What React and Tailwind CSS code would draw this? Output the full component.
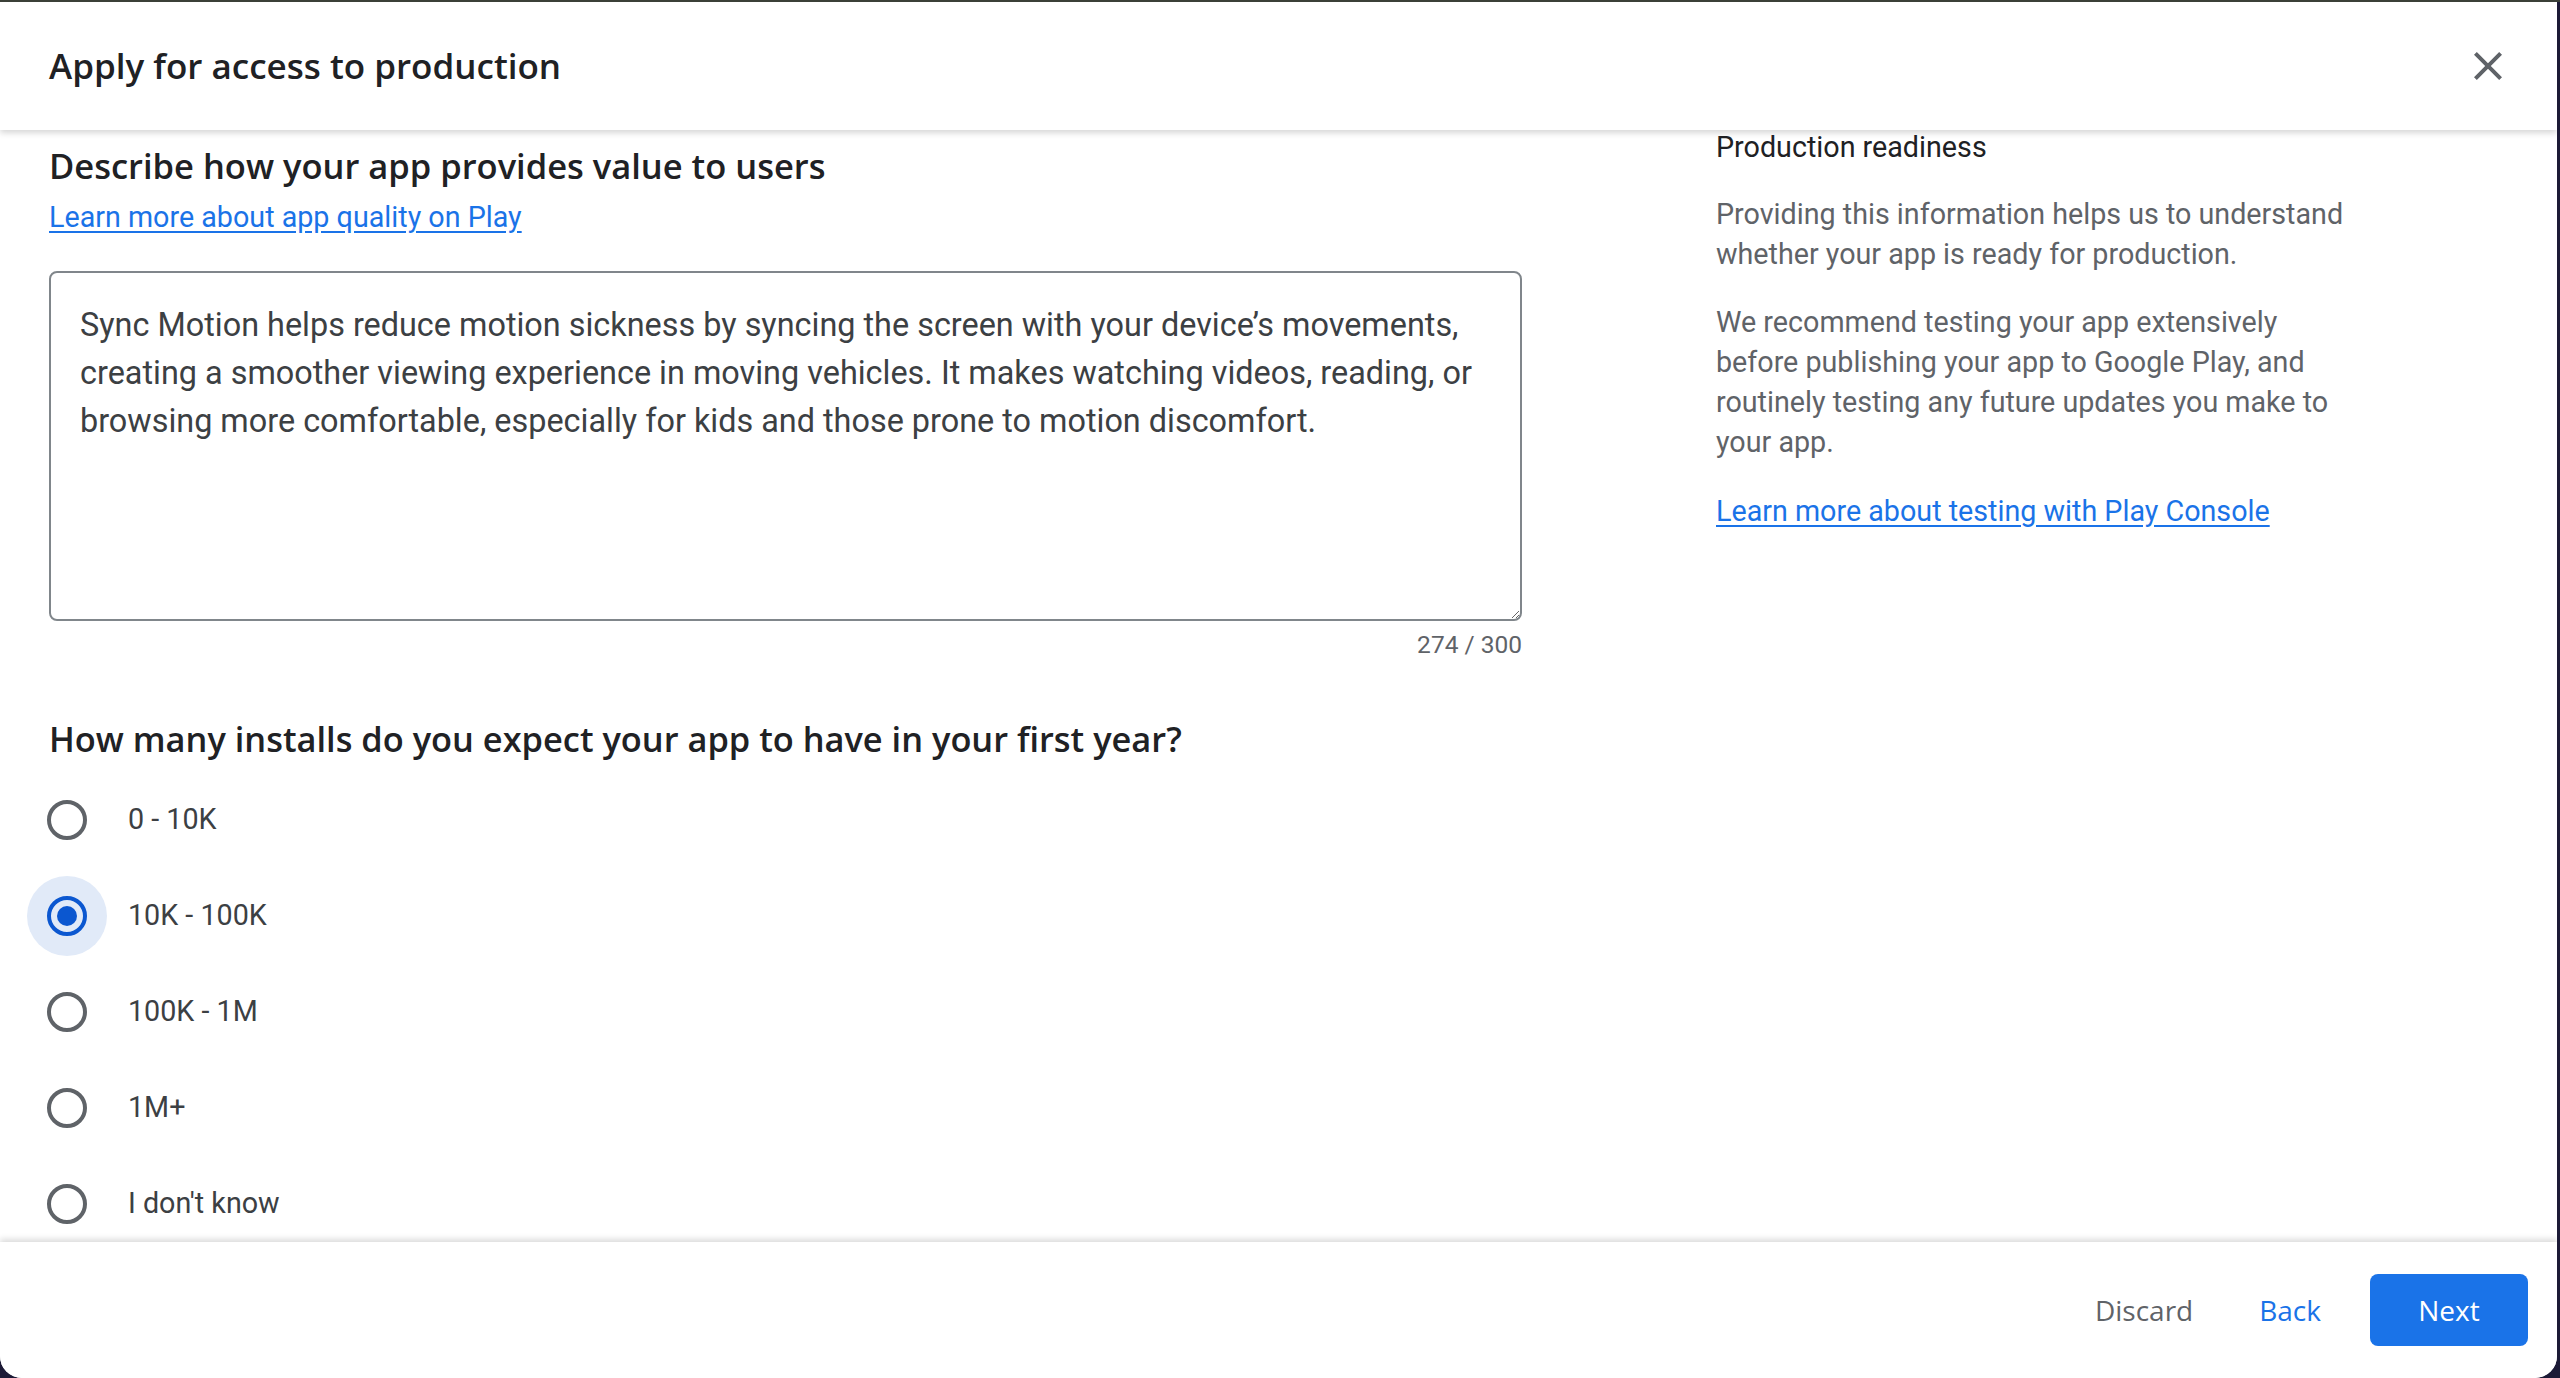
import React, { useState } from 'react';

const sans = { fontFamily: '"Open Sans", "Noto Sans", sans-serif' };

const options = ['0 - 10K', '10K - 100K', '100K - 1M', '1M+', "I don't know"];

const description =
  'Sync Motion helps reduce motion sickness by syncing the screen with your device’s movements, creating a smoother viewing experience in moving vehicles. It makes watching videos, reading, or browsing more comfortable, especially for kids and those prone to motion discomfort.';

const CloseIcon = () => (
  <svg width="48" height="48" viewBox="0 0 24 24" fill="#5f6368">
    <path d="M19 6.41L17.59 5 12 10.59 6.41 5 5 6.41 10.59 12 5 17.59 6.41 19 12 13.41 17.59 19 19 17.59 13.41 12z" />
  </svg>
);

const Radio = ({ checked }) => (
  <div
    className={
      'w-[80px] h-[80px] rounded-full flex items-center justify-center ' +
      (checked ? 'bg-[#e1eaf8]' : '')
    }
  >
    <div
      className={
        'w-[40px] h-[40px] rounded-full border-[4px] flex items-center justify-center ' +
        (checked ? 'border-[#0b57d0]' : 'border-[#5f6368]')
      }
    >
      {checked && <div className="w-[20px] h-[20px] rounded-full bg-[#0b57d0]" />}
    </div>
  </div>
);

export default function App() {
  const [selected, setSelected] = useState(1);
  const [text, setText] = useState(description);

  return (
    <div className="w-full h-[1378px] bg-[#1c1a36] flex flex-col overflow-hidden" style={{ fontFamily: 'Roboto, sans-serif' }}>
      <div className="h-[2px] shrink-0 bg-[#3b4038]" />
      <div className="w-[2557px] flex-1 bg-white rounded-b-[22px] flex flex-col overflow-hidden">
        {/* header */}
        <div className="relative z-10 h-[128px] shrink-0 flex items-center justify-between pl-[49px] pr-[45px] bg-white shadow-[0_3px_6px_rgba(0,0,0,0.16)]">
          <h1 className="text-[35px] leading-[44px] font-semibold text-[#202124]" style={sans}>
            Apply for access to production
          </h1>
          <button className="w-[48px] h-[48px] flex items-center justify-center">
            <CloseIcon />
          </button>
        </div>

        {/* body */}
        <div className="flex-1 flex overflow-hidden pl-[49px]">
          <div className="w-[1473px] shrink-0 flex flex-col">
            <h2 className="shrink-0 mt-[16px] text-[34.5px] leading-[40px] font-semibold text-[#202124]" style={sans}>
              Describe how your app provides value to users
            </h2>
            <a href="#" className="shrink-0 mt-[11px] text-[28.7px] leading-[40px] text-[#1a73e8] underline underline-offset-[4px] self-start">
              Learn more about app quality on Play
            </a>
            <textarea
              value={text}
              onChange={(e) => setText(e.target.value)}
              className="shrink-0 mt-[34px] w-full h-[350px] rounded-[8px] border-2 border-[#80868b] pt-[28px] px-[29px] text-[32.4px] leading-[48px] text-[#3c4043] outline-none resize-y"
              style={{ fontFamily: 'Roboto, sans-serif' }}
            />
            <div className="shrink-0 mt-[8px] text-right text-[24.5px] leading-[32px] text-[#5f6368]">
              {text.length} / 300
            </div>
            <h2 className="shrink-0 mt-[58px] text-[34.4px] leading-[40px] font-semibold text-[#202124]" style={sans}>
              How many installs do you expect your app to have in your first year?
            </h2>
            <div className="shrink-0 mt-[13px] flex flex-col">
              {options.map((opt, i) => (
                <label
                  key={opt}
                  onClick={() => setSelected(i)}
                  className="shrink-0 h-[96px] flex items-center -ml-[22px] cursor-pointer"
                >
                  <Radio checked={selected === i} />
                  <span className="ml-[21px] text-[28.7px] text-[#3c4043]">{opt}</span>
                </label>
              ))}
            </div>
          </div>

          <div className="ml-[194px] w-[720px] shrink-0 flex flex-col text-[28.7px]">
            <div className="leading-[34px] text-[#202124]">Production readiness</div>
            <p className="mt-[30px] leading-[40px] text-[#5f6368]">
              Providing this information helps us to understand
              <br />
              whether your app is ready for production.
            </p>
            <p className="mt-[28px] leading-[40px] text-[#5f6368]">
              We recommend testing your app extensively
              <br />
              before publishing your app to Google Play, and
              <br />
              routinely testing any future updates you make to
              <br />
              your app.
            </p>
            <a href="#" className="mt-[29px] leading-[40px] text-[#1a73e8] underline underline-offset-[4px] self-start">
              Learn more about testing with Play Console
            </a>
          </div>
        </div>

        {/* footer */}
        <div className="relative z-10 h-[136px] shrink-0 flex items-center justify-end pr-[29px] bg-white shadow-[0_-3px_6px_rgba(0,0,0,0.14)]" style={sans}>
          <button className="px-[16px] h-[72px] text-[28px] font-medium text-[#5f6368]">Discard</button>
          <button className="ml-[34px] px-[16px] h-[72px] text-[28px] font-medium text-[#1a73e8]">Back</button>
          <button className="ml-[33px] w-[158px] h-[72px] rounded-[8px] bg-[#1a73e8] text-[28px] font-medium text-white">
            Next
          </button>
        </div>
      </div>
    </div>
  );
}
